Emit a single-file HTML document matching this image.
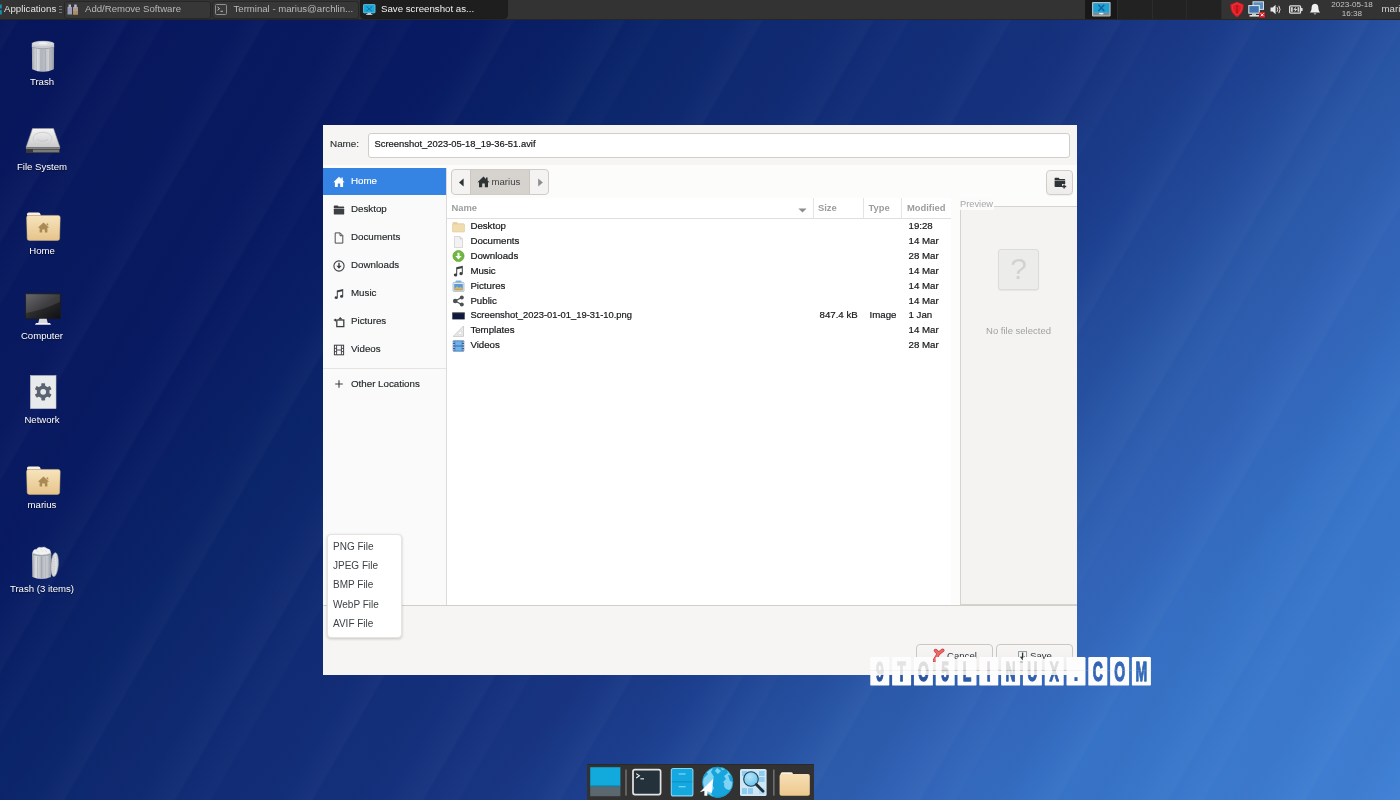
<!DOCTYPE html>
<html><head><meta charset="utf-8"><title>Save screenshot as...</title>
<style>
*{box-sizing:border-box;margin:0;padding:0}
html,body{width:1400px;height:800px;overflow:hidden}
body{font-family:"Liberation Sans",sans-serif;font-size:9.5px;color:#2e3436;position:relative;
 background:#0a1c66;}
#bg{position:absolute;left:0;top:0;width:1400px;height:800px}
.abs{position:absolute}
/* top panel */
#panel{position:absolute;left:0;top:0;width:1400px;height:20px;background:#333333;border-bottom:1px solid #262626;color:#d6d6d6;}
#panel .t{opacity:.999;position:absolute;top:0;height:18px;line-height:17px;white-space:nowrap}
.tb{position:absolute;top:1px;height:17.500px;border-radius:3px;background:#373737;border:1px solid #272727}
.tb.act{background:#1e1e1e;border-color:#1c1c1c;top:-1px;height:20px;border-radius:0 0 4px 4px}
/* desktop icons */
.dlabel{opacity:.999;position:absolute;color:#fff;text-align:center;width:120px;font-size:9.6px;line-height:12px;text-shadow:0 1px 1px rgba(0,0,0,.6)}
/* dialog */
#dlg{opacity:.999;position:absolute;left:323px;top:125px;width:754px;height:549.500px;background:#f6f5f4;overflow:hidden}
#side{position:absolute;left:0;top:43px;width:124px;height:437px;background:#fafafa;border-right:1px solid #dcdad7}
.srow{position:absolute;left:0;width:123px;height:27px;line-height:25px;padding-left:28px;font-size:9.75px;color:#23282a;-webkit-text-stroke:0.150px #23282a}
.srow.sel{background:#3584e4;color:#fff;-webkit-text-stroke:0.150px #fff}
#list{position:absolute;left:124px;top:73px;width:504px;height:407px;background:#fff}
.frow{position:absolute;left:124px;width:504px;height:15px;line-height:14px;font-size:9.7px;color:#15181a;-webkit-text-stroke:0.2px #15181a;white-space:nowrap}
.frow span{position:absolute;top:0}
.si{position:absolute;left:10px;top:8px;width:12px;height:12px}
.fi{position:absolute;left:4.800px;top:1.500px;width:13px;height:12px}
.hd{position:absolute;top:4px;font-size:9.400px;line-height:12px;font-weight:bold;color:#9b9d9e}
.btn{position:absolute;width:77px;height:27px;border:1px solid #cdc7c2;border-radius:4px;background:linear-gradient(#f7f6f5,#efedeb)}
.mi{position:absolute;left:5px;font-size:10px;line-height:14px;color:#3d4245;white-space:nowrap}
</style></head><body>
<div id="bg" style="background:linear-gradient(131deg,#07155a 0%,#09195f 12%,#081a62 23%,#0b256a 32%,#0f2970 37%,#15317d 51%,#183582 56%,#1d4190 62%,#2b59a9 70.5%,#3264b8 76.7%,#3672c6 83%,#4181d5 100%)"></div>
<div id="bg2" class="abs" style="left:0;top:0;width:1400px;height:800px;background:repeating-linear-gradient(120deg,rgba(255,255,255,0) 0px,rgba(255,255,255,.022) 24px,rgba(255,255,255,0) 27px,rgba(0,0,40,.025) 60px,rgba(255,255,255,0) 88px,rgba(255,255,255,.025) 120px,rgba(255,255,255,0) 123px,rgba(255,255,255,.015) 151px,rgba(255,255,255,0) 154px,rgba(0,0,40,.02) 190px,rgba(255,255,255,0) 215px)"></div>
<div id="panel">
 <svg class="abs" style="left:0;top:3px" width="4" height="13" viewBox="0 0 4 13"><rect x="0" y="1.500" width="1.800" height="10" fill="#178fae"/><rect x="0" y="5.500" width="3" height="1.600" fill="#333"/></svg>
 <div class="t" style="left:4px;color:#e4e4e4;font-size:9.7px">Applications</div>
 <svg class="abs" style="left:58px;top:5px" width="4" height="9" viewBox="0 0 4 9"><rect x="1" y="1" width="3" height="1" fill="#777"/><rect x="1" y="4" width="3" height="1" fill="#777"/><rect x="1" y="7" width="3" height="1" fill="#777"/></svg>
 <div class="tb" style="left:64px;width:147px"></div>
 <svg class="abs" style="left:67px;top:4px" width="12" height="11" viewBox="0 0 12 11"><rect x="0.5" y="3" width="4.5" height="7.5" fill="#9a9bb8"/><rect x="6" y="3" width="5" height="7.5" fill="#a89a98"/><rect x="1.5" y="0.5" width="2.5" height="3" fill="#b8b8cc"/><rect x="7.2" y="0.5" width="2.5" height="3" fill="#b8b8cc"/><rect x="6" y="7" width="5" height="3.5" fill="#b08a5a"/></svg>
 <div class="t" style="left:85px;color:#b9b9b9;font-size:9.6px">Add/Remove Software</div>
 <div class="tb" style="left:212px;width:147px"></div>
 <svg class="abs" style="left:215px;top:4px" width="12" height="11" viewBox="0 0 12 11"><rect x="0.5" y="0.5" width="11" height="10" rx="1" fill="#3a3a3a" stroke="#8f8f8f" stroke-width="1"/><path d="M2.5 3 L4.5 4.6 L2.5 6.2" fill="none" stroke="#cfcfcf" stroke-width="0.9"/><rect x="5.5" y="6.8" width="2.4" height="0.9" fill="#cfcfcf"/></svg>
 <div class="t" style="left:233.5px;color:#b9b9b9;font-size:9.6px">Terminal - marius@archlin...</div>
 <div class="tb act" style="left:360px;width:148px"></div>
 <svg class="abs" style="left:363px;top:3.500px" width="12.500" height="11.600" viewBox="0 0 14 13"><rect x="0.5" y="0.5" width="13" height="9.5" rx="0.8" fill="#18a8d8" stroke="#7fd0ea" stroke-width="0.8"/><path d="M4 3 L10 8 M10 3 L4 8" stroke="#0d6fa0" stroke-width="1.1"/><rect x="5" y="10" width="4" height="1.6" fill="#c8c8c8"/><rect x="3.5" y="11.4" width="7" height="1.2" fill="#dadada"/></svg>
 <div class="t" style="left:381px;color:#f2f2f2;font-size:9.7px">Save screenshot as...</div>
 <div class="abs" style="left:1085px;top:0;width:137px;height:19px;background:#222"></div>
 <div class="abs" style="left:1085px;top:0;width:33px;height:19px;background:#181818"></div>
 <div class="abs" style="left:1117px;top:0;width:1px;height:19px;background:#2c2c2c"></div>
 <div class="abs" style="left:1152px;top:0;width:1px;height:19px;background:#2c2c2c"></div>
 <div class="abs" style="left:1186px;top:0;width:1px;height:19px;background:#2c2c2c"></div>
 <div class="abs" style="left:1221px;top:0;width:1px;height:19px;background:#2c2c2c"></div>
 <svg class="abs" style="left:1092px;top:2px" width="19" height="15" viewBox="0 0 19 15"><rect x="0" y="0" width="18.600" height="14.400" rx="0.800" fill="#b4bcc1"/><rect x="1.200" y="1.200" width="16.200" height="9.600" fill="#1ea2d3"/><rect x="1.200" y="10.800" width="16.200" height="2.600" fill="#7f8a90"/><path d="M6.400 2.800 L12.200 9 M12.200 2.800 L6.400 9" stroke="#0f62a4" stroke-width="1.500"/><ellipse cx="9.300" cy="11.600" rx="2.400" ry="0.900" fill="#e8ecee"/></svg>
 <svg class="abs" style="left:1229px;top:1px" width="16" height="17" viewBox="0 0 16 17"><path d="M8 0.8 L14.6 3.6 C14.8 9 12.6 13.6 8 16.2 C3.4 13.6 1.2 9 1.4 3.6 Z" fill="#e01b24"/><circle cx="8" cy="5.600" r="1" fill="#a3121a"/><rect x="7.300" y="7.400" width="1.400" height="5" fill="#a3121a"/><path d="M8 2.400 L12.800 4.600 C12.800 8.600 11.400 12 8 14.200 C4.600 12 3.200 8.600 3.200 4.600Z" fill="none" stroke="#f2555c" stroke-width="0.500"/></svg>
 <svg class="abs" style="left:1248px;top:1px" width="18" height="17" viewBox="0 0 18 17"><rect x="5" y="0.8" width="10.5" height="7.6" fill="#5b8fc4" stroke="#d8dde2" stroke-width="1"/><rect x="0.8" y="4.6" width="10.5" height="7.6" fill="#3f74b0" stroke="#e6e9ec" stroke-width="1"/><rect x="4" y="12.6" width="4" height="1.4" fill="#c9c9c9"/><rect x="1.5" y="14" width="9.5" height="1.6" fill="#dedede"/><rect x="11.4" y="11" width="5.6" height="5.6" fill="#e01b24"/><path d="M12.8 12.4 L15.6 15.2 M15.6 12.4 L12.8 15.2" stroke="#fff" stroke-width="1"/></svg>
 <svg class="abs" style="left:1270px;top:4px" width="12" height="11" viewBox="0 0 12 11"><path d="M0.5 3.6 H2.6 L5.6 0.8 V10.2 L2.6 7.4 H0.5 Z" fill="#e8e8e8"/><path d="M7 3.2 Q8.4 5.5 7 7.8" fill="none" stroke="#e8e8e8" stroke-width="1"/><path d="M8.8 1.8 Q11.2 5.5 8.8 9.2" fill="none" stroke="#e8e8e8" stroke-width="1"/></svg>
 <svg class="abs" style="left:1289px;top:5px" width="14" height="9" viewBox="0 0 14 9"><rect x="0.6" y="0.8" width="11" height="7.4" rx="1" fill="none" stroke="#e0e0e0" stroke-width="1.2"/><rect x="12" y="3" width="1.6" height="3" fill="#e0e0e0"/><path d="M7.2 1.6 L4.2 4.8 H6.2 L5.2 7.4 L8.4 4 H6.4 Z" fill="#e0e0e0"/><rect x="1.8" y="2.2" width="2" height="4.6" fill="#cfcfcf"/><rect x="8.6" y="2.2" width="1.8" height="4.6" fill="#cfcfcf"/></svg>
 <svg class="abs" style="left:1309px;top:3px" width="12" height="13" viewBox="0 0 12 13"><path d="M6 0.8 C3.4 0.8 2.6 3 2.6 5 C2.6 7.4 1.8 8.4 0.8 9.6 H11.2 C10.2 8.4 9.4 7.4 9.4 5 C9.4 3 8.6 0.8 6 0.8 Z" fill="#f0f0f0"/><path d="M4.6 10.4 A1.5 1.5 0 0 0 7.4 10.4 Z" fill="#f0f0f0"/></svg>
 <div class="abs" style="left:1322px;top:0;width:60px;text-align:center;color:#c4c4c4;font-size:8.100px;line-height:8.600px;padding-top:1.400px;opacity:.999">2023-05-18<br>16:38</div>
 <div class="t" style="left:1381.5px;color:#d4d4d4;font-size:9.7px">marius</div>
</div>
<!-- desktop icons -->
<svg width="0" height="0" style="position:absolute"><defs>
<linearGradient id="can" x1="0" x2="1" y1="0" y2="0"><stop offset="0" stop-color="#a0a4ac"/><stop offset="0.22" stop-color="#dfe1e5"/><stop offset="0.48" stop-color="#b2b6bd"/><stop offset="0.75" stop-color="#cdd0d5"/><stop offset="1" stop-color="#9498a2"/></linearGradient>
<linearGradient id="fold" x1="0" x2="0" y1="0" y2="1"><stop offset="0" stop-color="#f7e4bd"/><stop offset="1" stop-color="#e6c48a"/></linearGradient>
<linearGradient id="mon" x1="0" x2="1" y1="0" y2="1"><stop offset="0" stop-color="#5a5a5e"/><stop offset="0.5" stop-color="#2a2a2d"/><stop offset="1" stop-color="#0f0f11"/></linearGradient>
<linearGradient id="drv" x1="0" x2="0" y1="0" y2="1"><stop offset="0" stop-color="#f4f4f4"/><stop offset="1" stop-color="#c9c9c9"/></linearGradient>
</defs></svg>
<svg class="abs" style="left:30px;top:39px" width="26" height="34" viewBox="0 0 26 34">
 <path d="M1.900 6 L2.100 30.200 Q13 35.400 23.900 30.200 L24.100 6 Z" fill="url(#can)"/>
 <path d="M6.400 10 V32 M10.800 10.500 V33 M15.400 10.500 V33 M19.800 10 V32" stroke="#8c9099" stroke-width="1.200" opacity=".38"/>
 <path d="M1.900 4.800 Q1.900 2.200 13 2.200 Q24.100 2.200 24.100 4.800 V8.200 Q13 11.400 1.900 8.200Z" fill="#c9ccd2"/>
 <ellipse cx="13" cy="4.900" rx="11.100" ry="2.800" fill="#d9dbdf" stroke="#b3b6bc" stroke-width="0.400"/>
 <ellipse cx="13" cy="4.300" rx="4.600" ry="1.200" fill="#eceef0"/>
 <path d="M1.900 8.200 Q13 11.400 24.100 8.200" fill="none" stroke="#8d9198" stroke-width="0.700"/>
</svg>
<div class="dlabel" style="left:-18px;top:76px">Trash</div>
<svg class="abs" style="left:25px;top:127px" width="36" height="28" viewBox="0 0 36 28">
 <path d="M7.5 1.5 H28.5 L35 20.5 H1 Z" fill="url(#drv)" stroke="#9a9a9a" stroke-width="0.6"/>
 <ellipse cx="17.5" cy="11.5" rx="9.5" ry="6.2" fill="none" stroke="#cfcfcf" stroke-width="1"/>
 <path d="M12 12.5 Q17 16 23 12.5" fill="none" stroke="#c4c4c4" stroke-width="0.9"/>
 <rect x="1" y="20.5" width="34" height="5.6" rx="0.8" fill="#3a3a3a"/>
 <rect x="1" y="20.5" width="34" height="1.4" fill="#8b8b8b"/>
 <rect x="8" y="22.6" width="26" height="2.6" fill="#7a7a7a"/>
</svg>
<div class="dlabel" style="left:-18px;top:160.500px">File System</div>
<svg class="abs" style="left:26px;top:211px" width="35" height="31" viewBox="0 0 35 31">
 <path d="M1 3.2 Q1 1.4 2.8 1.4 H12.5 Q14 1.4 14.4 3 L14.8 4.6 H1 Z" fill="#fbf3e2"/>
 <path d="M0.6 6.4 Q0.6 4.4 2.6 4.4 H32 Q34.2 4.400 34.200 6.400 L33.600 27.600 Q33.600 29.400 31.600 29.400 H3.200 Q1.200 29.400 1.200 27.600 Z" fill="url(#fold)" stroke="#d9b777" stroke-width="0.5"/>
 <path d="M17.5 11.600 L11.800 16.800 H13.600 V21.600 H16.200 V18.400 H18.800 V21.600 H21.400 V16.800 H23.200 Z M20.600 12.400 h1.600 v2.600 l-1.600 -1.500z" fill="#a98a55"/>
</svg>
<div class="dlabel" style="left:-18px;top:245px">Home</div>
<svg class="abs" style="left:25px;top:293px" width="36" height="33" viewBox="0 0 36 33">
 <rect x="0.4" y="0.6" width="35.2" height="25.200" rx="0.8" fill="url(#mon)" stroke="#1c1c1e" stroke-width="0.8"/>
 <path d="M1.2 1.4 H34.8 V9 Q18 17 1.2 20 Z" fill="#ffffff" opacity="0.10"/>
 <path d="M14.400 25.800 H21.600 L22.800 30 H13.200 Z" fill="#d9d9dc"/>
 <path d="M11 30 H25 L26 31.800 H10 Z" fill="#f2f2f4"/>
</svg>
<div class="dlabel" style="left:-18px;top:329.500px">Computer</div>
<svg class="abs" style="left:30px;top:375px" width="27" height="35" viewBox="0 0 27 35">
 <rect x="0.400" y="0.600" width="25.600" height="33" fill="#e9eaec" stroke="#c3c6ca" stroke-width="0.6"/>
 <g transform="translate(13.200 16.800)" fill="#5c6370">
  <circle r="6.400"/>
  <g id="teeth"><rect x="-1.900" y="-8.600" width="3.800" height="17.200" rx="0.6"/><rect x="-1.900" y="-8.600" width="3.800" height="17.200" rx="0.6" transform="rotate(60)"/><rect x="-1.900" y="-8.600" width="3.800" height="17.200" rx="0.6" transform="rotate(120)"/></g>
  <circle r="2.900" fill="#e9eaec"/>
 </g>
</svg>
<div class="dlabel" style="left:-18px;top:413.500px">Network</div>
<svg class="abs" style="left:26px;top:464.500px" width="35" height="31" viewBox="0 0 35 31">
 <path d="M1 3.200 Q1 1.400 2.800 1.400 H12.500 Q14 1.400 14.400 3 L14.800 4.600 H1 Z" fill="#fbf3e2"/>
 <path d="M0.600 6.400 Q0.600 4.400 2.600 4.400 H32 Q34.200 4.400 34.200 6.400 L33.600 27.600 Q33.600 29.400 31.600 29.400 H3.200 Q1.200 29.400 1.200 27.600 Z" fill="url(#fold)" stroke="#d9b777" stroke-width="0.500"/>
 <path d="M17.500 11.600 L11.800 16.800 H13.600 V21.600 H16.200 V18.400 H18.800 V21.600 H21.400 V16.800 H23.200 Z M20.600 12.400 h1.600 v2.600 l-1.600 -1.500z" fill="#a98a55"/>
</svg>
<div class="dlabel" style="left:-18px;top:498.500px">marius</div>
<svg class="abs" style="left:30px;top:544px" width="30" height="38" viewBox="0 0 30 38">
 <ellipse cx="24.600" cy="20.600" rx="3.700" ry="12" fill="#d3d6d9" stroke="#9ea2a7" stroke-width="0.600" transform="rotate(4 24.600 20.600)"/>
 <path d="M24.800 10.500 Q27 20 25 31" fill="none" stroke="#eef0f1" stroke-width="1.100" stroke-dasharray="1.300 1.300"/>
 <path d="M2 9.500 L2.300 33 Q11.600 37 21 33 L21.300 9.500 Z" fill="url(#can)"/>
 <path d="M7.400 12.500 V34 M11.600 13 V34.800 M15.800 12.500 V34.200" stroke="#8c9099" stroke-width="1.100" opacity=".4"/>
 <ellipse cx="11.650" cy="9.600" rx="9.700" ry="2.600" fill="#9da1a6"/>
 <path d="M2.600 9.200 Q3 5 6.500 5.200 Q8 2.400 11.500 3.400 Q15 2 17 4.600 Q20.800 5 20.700 9.200 Q11.600 12.600 2.600 9.200 Z" fill="#f1f2f3" stroke="#c9ccd0" stroke-width="0.400"/>
 <path d="M6.500 6.500 L9 8.500 M10.500 5 L13 7.800 M14.500 5.500 L17 8.200" stroke="#cfd2d6" stroke-width="0.600"/>
</svg>
<div class="dlabel" style="left:-18px;top:582.500px">Trash (3 items)</div>
<div id="dlg">
 <div class="abs" style="left:0;top:40px;width:754px;height:440px;background:#fcfcfb"></div>
 <div class="abs" style="left:7px;top:13px;font-size:9.900px;line-height:12px;color:#2e3436;-webkit-text-stroke:0.150px #2e3436">Name:</div>
 <div class="abs" style="left:45px;top:8px;width:702px;height:25px;background:#fff;border:1px solid #d2cdc9;border-radius:3px;line-height:20.500px;padding-left:5.500px;font-size:9.420px;color:#15181a;-webkit-text-stroke:0.2px #15181a">Screenshot_2023-05-18_19-36-51.avif</div>
 <div id="side">
  <div class="srow sel" style="top:0px"><svg class="si" viewBox="0 0 12 12"><path d="M6 0.800 L0.400 6.200 H1.900 V11 H4.800 V7.600 H7.200 V11 H10.100 V6.200 H11.600 L9.800 4.500 V1.600 H8.400 V3.100Z" fill="#fff"/></svg>Home</div>
  <div class="srow" style="top:28px"><svg class="si" viewBox="0 0 12 12"><path d="M0.800 2.200 Q0.800 1.400 1.600 1.400 H4.600 L5.600 2.600 H10.400 Q11.200 2.600 11.200 3.400 V4 H0.800Z" fill="#3c4043"/><rect x="0.800" y="4.600" width="10.400" height="6" rx="0.700" fill="#3c4043"/></svg>Desktop</div>
  <div class="srow" style="top:56px"><svg class="si" viewBox="0 0 12 12"><path d="M2.200 0.900 H7.200 L9.800 3.500 V11.100 H2.200Z M7 1 V3.700 H9.700" fill="none" stroke="#4a4e51" stroke-width="1"/></svg>Documents</div>
  <div class="srow" style="top:84px"><svg class="si" viewBox="0 0 12 12"><circle cx="6" cy="6" r="5.100" fill="none" stroke="#3c4043" stroke-width="1.100"/><path d="M5.300 2.800 H6.700 V5.800 H8.600 L6 8.800 L3.400 5.800 H5.300Z" fill="#3c4043"/></svg>Downloads</div>
  <div class="srow" style="top:112px"><svg class="si" viewBox="0 0 12 12"><path d="M3.800 2.400 L10.200 1 V8.400 A1.600 1.400 0 1 1 9.200 7.100 V3.300 L4.800 4.300 V9.700 A1.600 1.400 0 1 1 3.800 8.400Z" fill="#3c4043"/></svg>Music</div>
  <div class="srow" style="top:140px"><svg class="si" viewBox="0 0 12 12"><rect x="3.800" y="4" width="7" height="6.600" fill="none" stroke="#3c4043" stroke-width="1.300"/><path d="M5 3.400 L7.300 1 L9.600 3.400Z" fill="#3c4043"/><path d="M0.400 4 L3 2.400 V5.800Z" fill="#3c4043"/></svg>Pictures</div>
  <div class="srow" style="top:168px"><svg class="si" viewBox="0 0 12 12"><rect x="1.400" y="1.200" width="9.200" height="9.600" fill="none" stroke="#3c4043" stroke-width="1"/><path d="M3.600 1.200 V10.800 M8.400 1.200 V10.800 M1.400 4.400 H3.600 M1.400 7.600 H3.600 M8.400 4.400 H10.600 M8.400 7.600 H10.600 M3.600 6 H8.400" stroke="#3c4043" stroke-width="0.900" fill="none"/></svg>Videos</div>
  <div class="abs" style="left:0;top:199.500px;width:123px;height:1px;background:#e6e4e2"></div>
  <div class="srow" style="top:202px;height:28px;line-height:27.300px"><svg class="si" viewBox="0 0 12 12"><path d="M6 2.200 V9.800 M2.200 6 H9.800" stroke="#3c4043" stroke-width="1.100"/></svg>Other Locations</div>
 </div>
 <!-- path bar -->
 <div class="abs" style="left:128px;top:44px;width:98px;height:26px;border:1px solid #d0cbc7;border-radius:4px;background:#f4f3f1;overflow:hidden">
  <div class="abs" style="left:18px;top:0;width:60px;height:24px;background:#d6d2ce;border-left:1px solid #cdc7c2;border-right:1px solid #cdc7c2"></div>
  <svg class="abs" style="left:5.500px;top:7.500px" width="7" height="9" viewBox="0 0 7 9"><path d="M5.600 0.600 V8.400 L1 4.500Z" fill="#2e3436"/></svg>
  <svg class="abs" style="left:24.500px;top:6px" width="13" height="12" viewBox="0 0 13 12"><path d="M6.500 0.600 L0.400 6.200 H2 V11.200 H5.200 V7.600 H7.800 V11.200 H11 V6.200 H12.600 L10.600 4.400 V1.400 H9 V2.900Z" fill="#2e3436"/></svg>
  <div class="abs" style="left:39.500px;top:5.500px;font-size:9.600px;line-height:12px;color:#3d4245">marius</div>
  <svg class="abs" style="left:84.500px;top:7.500px" width="7" height="9" viewBox="0 0 7 9"><path d="M1.200 0.600 V8.400 L5.800 4.500Z" fill="#8b8e8f"/></svg>
 </div>
 <!-- new folder -->
 <div class="abs" style="left:723px;top:44.500px;width:27px;height:25.500px;border:1px solid #d2cdc9;border-radius:4px;background:linear-gradient(#f5f4f3,#eeedeb);box-shadow:0 1px 1px rgba(0,0,0,.05)"></div>
 <svg class="abs" style="left:730.500px;top:52px" width="13" height="12" viewBox="0 0 13 12"><path d="M0.600 1.600 Q0.600 0.800 1.400 0.800 H4.600 L5.600 2 H10.400 Q11.200 2 11.200 2.800 V3.400 H0.600Z" fill="#2e3436"/><path d="M0.600 4 H11.200 V7 H8 V10 H1.400 Q0.600 10 0.600 9.200Z" fill="#2e3436"/><path d="M9.400 7.400 H10.800 V8.800 H12.200 V10.200 H10.800 V11.600 H9.400 V10.200 H8 V8.800 H9.400Z" fill="#2e3436"/></svg>
 <!-- list -->
 <div id="list">
  <div class="abs" style="left:0;top:19.500px;width:504px;height:1px;background:#e1dfdd"></div>
  <div class="abs" style="left:366px;top:0;width:1px;height:20px;background:#e6e4e2"></div>
  <div class="abs" style="left:416px;top:0;width:1px;height:20px;background:#e6e4e2"></div>
  <div class="abs" style="left:454.300px;top:0;width:1px;height:20px;background:#e6e4e2"></div>
  <div class="hd" style="left:4.500px">Name</div>
  <div class="hd" style="left:371px">Size</div>
  <div class="hd" style="left:421.500px">Type</div>
  <div class="hd" style="left:460px">Modified</div>
  <svg class="abs" style="left:350.500px;top:9.500px" width="9" height="5" viewBox="0 0 9 5"><path d="M0.400 0.400 H8.600 L4.500 4.600Z" fill="#8b8e8f"/></svg>
 </div>
 <div class="frow" style="top:94.20px"><svg class="fi" viewBox="0 0 13 12"><path d="M0.5 2 Q0.5 1 1.500 1 H5 L6 2.400 H12 V4 H0.500Z" fill="#e9d3a6"/><rect x="0.400" y="3" width="12.200" height="8" rx="0.800" fill="#f1dcb0" stroke="#dcc08b" stroke-width="0.500"/></svg><span style="left:23.400px">Desktop</span><span style="left:372.500px"></span><span style="left:422.500px"></span><span style="left:461.500px">19:28</span></div>
 <div class="frow" style="top:109.07px"><svg class="fi" viewBox="0 0 13 12"><path d="M2.500 0.500 H8 L10.500 3 V11.500 H2.500Z" fill="#f2f2f2" stroke="#c6c6c6" stroke-width="0.600"/><path d="M8 0.500 V3 H10.500" fill="#dcdcdc" stroke="#c6c6c6" stroke-width="0.500"/></svg><span style="left:23.400px">Documents</span><span style="left:372.500px"></span><span style="left:422.500px"></span><span style="left:461.500px">14 Mar</span></div>
 <div class="frow" style="top:123.95px"><svg class="fi" viewBox="0 0 13 12"><circle cx="6.500" cy="6" r="5.600" fill="#6fb83f"/><circle cx="6.500" cy="6" r="5.600" fill="none" stroke="#5aa02f" stroke-width="0.600"/><path d="M5.500 2.800 H7.500 V6 H9.600 L6.500 9.400 L3.400 6 H5.500Z" fill="#fff"/></svg><span style="left:23.400px">Downloads</span><span style="left:372.500px"></span><span style="left:422.500px"></span><span style="left:461.500px">28 Mar</span></div>
 <div class="frow" style="top:138.82px"><svg class="fi" viewBox="0 0 13 12"><path d="M4.200 2.200 L10.800 0.800 V8.600 A1.700 1.500 0 1 1 9.800 7.300 V3.200 L5.200 4.200 V9.900 A1.700 1.500 0 1 1 4.200 8.600Z" fill="#3c4043"/></svg><span style="left:23.400px">Music</span><span style="left:372.500px"></span><span style="left:422.500px"></span><span style="left:461.500px">14 Mar</span></div>
 <div class="frow" style="top:153.70px"><svg class="fi" viewBox="0 0 13 12"><rect x="3.500" y="0.600" width="6" height="3" rx="1" fill="#7fb2dd"/><rect x="1" y="2.400" width="11" height="9" rx="0.800" fill="#e6e8ea" stroke="#8fb0cc" stroke-width="0.700"/><rect x="2.200" y="4" width="8.600" height="5" fill="#5b9bd5"/><path d="M2.200 9 L5 6.200 L7 8 L8.600 6.800 L10.800 9Z" fill="#d9b36a"/><rect x="2.200" y="9" width="8.600" height="1.400" fill="#c9a25a"/></svg><span style="left:23.400px">Pictures</span><span style="left:372.500px"></span><span style="left:422.500px"></span><span style="left:461.500px">14 Mar</span></div>
 <div class="frow" style="top:168.57px"><svg class="fi" viewBox="0 0 13 12"><path d="M3.200 6 L9.600 2.400 M3.200 6 L9.600 9.600" stroke="#4d5154" stroke-width="1.200"/><circle cx="3.200" cy="6" r="2.300" fill="#4d5154"/><circle cx="9.800" cy="2.400" r="2" fill="#4d5154"/><circle cx="9.800" cy="9.600" r="2" fill="#4d5154"/></svg><span style="left:23.400px">Public</span><span style="left:372.500px"></span><span style="left:422.500px"></span><span style="left:461.500px">14 Mar</span></div>
 <div class="frow" style="top:183.45px"><svg class="fi" viewBox="0 0 13 12"><rect x="0.300" y="2.600" width="12.400" height="6.800" fill="#101a3c"/><rect x="0.300" y="2.600" width="12.400" height="0.800" fill="#3a3a3a"/></svg><span style="left:23.400px;font-size:9.380px">Screenshot_2023-01-01_19-31-10.png</span><span style="left:372.500px">847.4 kB</span><span style="left:422.500px">Image</span><span style="left:461.500px">1 Jan</span></div>
 <div class="frow" style="top:198.32px"><svg class="fi" viewBox="0 0 13 12"><path d="M11.500 1 V11.400 H1.200Z" fill="#ececec" stroke="#bdbdbd" stroke-width="0.700"/><path d="M9.600 5.200 V9.600 H5.200Z" fill="#fff" stroke="#c8c8c8" stroke-width="0.500"/></svg><span style="left:23.400px">Templates</span><span style="left:372.500px"></span><span style="left:422.500px"></span><span style="left:461.500px">14 Mar</span></div>
 <div class="frow" style="top:213.20px"><svg class="fi" viewBox="0 0 13 12"><rect x="0.800" y="0.600" width="11.400" height="10.800" rx="0.600" fill="#2f5f9c"/><rect x="3.200" y="1.200" width="6.600" height="4.400" fill="#6db2ea"/><rect x="3.200" y="6.400" width="6.600" height="4.400" fill="#6db2ea"/><g fill="#dfe9f3"><rect x="1.300" y="1.400" width="1.200" height="1.400"/><rect x="1.300" y="4" width="1.200" height="1.400"/><rect x="1.300" y="6.600" width="1.200" height="1.400"/><rect x="1.300" y="9.200" width="1.200" height="1.400"/><rect x="10.500" y="1.400" width="1.200" height="1.400"/><rect x="10.500" y="4" width="1.200" height="1.400"/><rect x="10.500" y="6.600" width="1.200" height="1.400"/><rect x="10.500" y="9.200" width="1.200" height="1.400"/></g></svg><span style="left:23.400px">Videos</span><span style="left:372.500px"></span><span style="left:422.500px"></span><span style="left:461.500px">28 Mar</span></div>
 <!-- preview -->
 <div class="abs" style="left:637px;top:80.500px;width:117px;height:399.500px;background:#f4f3f2;border:1px solid #d6d3cf;border-right:none"></div>
 <div class="abs" style="left:637px;top:73px;padding-right:1px;background:#fbfbfa;font-size:9.300px;line-height:12px;color:#a6a8a9">Preview</div>
 <div class="abs" style="left:675px;top:123.500px;width:41px;height:41px;background:#ececeb;border:1px solid #dddbd8;border-radius:3px;box-shadow:0 1px 1px rgba(0,0,0,.06);text-align:center;font-size:30px;line-height:38px;color:#d2d2d1">?</div>
 <div class="abs" style="left:637px;top:199.700px;width:117px;text-align:center;font-size:9.500px;line-height:12px;color:#9fa1a2">No file selected</div>
 <div class="abs" style="left:0;top:479.500px;width:754px;height:1px;background:#d1cdc9"></div>
 <!-- buttons -->
 <div class="btn" style="left:593px;top:519px"></div>
 <div class="btn" style="left:673px;top:519px"></div>
 <svg class="abs" style="left:609px;top:523px" width="14" height="14" viewBox="0 0 14 14"><g fill="none" stroke-linecap="round" stroke-linejoin="round"><path d="M3.600 2.600 L6.400 5.600 L10.600 2.400 M6.400 5.600 L4.600 9 L2.400 12.600" stroke="#b93a3a" stroke-width="3.600"/><path d="M3.600 2.600 L6.400 5.600 L10.600 2.400 M6.400 5.600 L4.600 9 L2.400 12.600" stroke="#f06a6a" stroke-width="2.400"/></g></svg>
 <div class="abs" style="left:624px;top:525px;font-size:9.600px;line-height:12px;color:#2e3436">Cancel</div>
 <svg class="abs" style="left:694.500px;top:526px" width="10" height="12" viewBox="0 0 10 12"><rect x="0.600" y="0.600" width="8" height="10.400" fill="#f6f6f6" stroke="#8a8e90" stroke-width="0.900"/><path d="M4.600 1.600 V7.400 M2.600 5.600 L4.600 8.200 L6.600 5.600" stroke="#2e3436" stroke-width="1.300" fill="none"/></svg>
 <div class="abs" style="left:707px;top:525px;font-size:9.600px;line-height:12px;color:#2e3436">Save</div>
 <!-- dropdown -->
 <div class="abs" style="left:4px;top:408.700px;width:75px;height:104px;background:#fff;border:1px solid #e6e3e0;border-radius:4px;box-shadow:0 1px 3px rgba(0,0,0,.2)">
  <div class="mi" style="top:5.300px">PNG File</div>
  <div class="mi" style="top:24.500px">JPEG File</div>
  <div class="mi" style="top:43.700px">BMP File</div>
  <div class="mi" style="top:62.900px">WebP File</div>
  <div class="mi" style="top:82.200px">AVIF File</div>
 </div>
</div>
<svg class="abs" style="left:868px;top:655px" width="286" height="34" viewBox="0 0 286 34">
<defs><mask id="wm" maskUnits="userSpaceOnUse" x="0" y="0" width="286" height="34"><rect width="286" height="34" fill="#000"/><rect x="2.3" y="2" width="19.0" height="28.600" rx="1.200" fill="#fff"/><rect x="24.1" y="2" width="19.0" height="28.600" rx="1.200" fill="#fff"/><rect x="45.9" y="2" width="19.0" height="28.600" rx="1.200" fill="#fff"/><rect x="67.7" y="2" width="19.0" height="28.600" rx="1.200" fill="#fff"/><rect x="89.5" y="2" width="19.0" height="28.600" rx="1.200" fill="#fff"/><rect x="111.3" y="2" width="19.0" height="28.600" rx="1.200" fill="#fff"/><rect x="133.1" y="2" width="19.0" height="28.600" rx="1.200" fill="#fff"/><rect x="154.9" y="2" width="19.0" height="28.600" rx="1.200" fill="#fff"/><rect x="176.7" y="2" width="19.0" height="28.600" rx="1.200" fill="#fff"/><rect x="198.5" y="2" width="19.0" height="28.600" rx="1.200" fill="#fff"/><rect x="220.3" y="2" width="19.0" height="28.600" rx="1.200" fill="#fff"/><rect x="242.1" y="2" width="19.0" height="28.600" rx="1.200" fill="#fff"/><rect x="263.9" y="2" width="19.0" height="28.600" rx="1.200" fill="#fff"/><text transform="translate(11.8 26.200) scale(0.520 1)" text-anchor="middle" font-family="Liberation Sans, sans-serif" font-weight="bold" font-size="27" fill="#000" stroke="#000" stroke-width="1.300" stroke-linejoin="round">9</text><text transform="translate(33.6 26.200) scale(0.520 1)" text-anchor="middle" font-family="Liberation Sans, sans-serif" font-weight="bold" font-size="27" fill="#000" stroke="#000" stroke-width="1.300" stroke-linejoin="round">T</text><text transform="translate(55.4 26.200) scale(0.520 1)" text-anchor="middle" font-family="Liberation Sans, sans-serif" font-weight="bold" font-size="27" fill="#000" stroke="#000" stroke-width="1.300" stroke-linejoin="round">O</text><text transform="translate(77.2 26.200) scale(0.520 1)" text-anchor="middle" font-family="Liberation Sans, sans-serif" font-weight="bold" font-size="27" fill="#000" stroke="#000" stroke-width="1.300" stroke-linejoin="round">5</text><text transform="translate(99.0 26.200) scale(0.520 1)" text-anchor="middle" font-family="Liberation Sans, sans-serif" font-weight="bold" font-size="27" fill="#000" stroke="#000" stroke-width="1.300" stroke-linejoin="round">L</text><text transform="translate(120.8 26.200) scale(0.520 1)" text-anchor="middle" font-family="Liberation Sans, sans-serif" font-weight="bold" font-size="27" fill="#000" stroke="#000" stroke-width="1.300" stroke-linejoin="round">I</text><text transform="translate(142.6 26.200) scale(0.520 1)" text-anchor="middle" font-family="Liberation Sans, sans-serif" font-weight="bold" font-size="27" fill="#000" stroke="#000" stroke-width="1.300" stroke-linejoin="round">N</text><text transform="translate(164.4 26.200) scale(0.520 1)" text-anchor="middle" font-family="Liberation Sans, sans-serif" font-weight="bold" font-size="27" fill="#000" stroke="#000" stroke-width="1.300" stroke-linejoin="round">U</text><text transform="translate(186.2 26.200) scale(0.520 1)" text-anchor="middle" font-family="Liberation Sans, sans-serif" font-weight="bold" font-size="27" fill="#000" stroke="#000" stroke-width="1.300" stroke-linejoin="round">X</text><text transform="translate(208.0 26.200) scale(0.800 0.950)" text-anchor="middle" font-family="Liberation Sans, sans-serif" font-weight="bold" font-size="27" fill="#000">.</text><text transform="translate(229.8 26.200) scale(0.520 1)" text-anchor="middle" font-family="Liberation Sans, sans-serif" font-weight="bold" font-size="27" fill="#000" stroke="#000" stroke-width="1.300" stroke-linejoin="round">C</text><text transform="translate(251.6 26.200) scale(0.520 1)" text-anchor="middle" font-family="Liberation Sans, sans-serif" font-weight="bold" font-size="27" fill="#000" stroke="#000" stroke-width="1.300" stroke-linejoin="round">O</text><text transform="translate(273.4 26.200) scale(0.520 1)" text-anchor="middle" font-family="Liberation Sans, sans-serif" font-weight="bold" font-size="27" fill="#000" stroke="#000" stroke-width="1.300" stroke-linejoin="round">M</text></mask></defs>
<rect width="286" height="34" fill="#fdfdfd" mask="url(#wm)"/>
<g opacity="0.07"><text transform="translate(11.8 26.200) scale(0.520 1)" text-anchor="middle" font-family="Liberation Sans, sans-serif" font-weight="bold" font-size="27" fill="#0a1430" stroke="#0a1430" stroke-width="1.300" stroke-linejoin="round">9</text><text transform="translate(33.6 26.200) scale(0.520 1)" text-anchor="middle" font-family="Liberation Sans, sans-serif" font-weight="bold" font-size="27" fill="#0a1430" stroke="#0a1430" stroke-width="1.300" stroke-linejoin="round">T</text><text transform="translate(55.4 26.200) scale(0.520 1)" text-anchor="middle" font-family="Liberation Sans, sans-serif" font-weight="bold" font-size="27" fill="#0a1430" stroke="#0a1430" stroke-width="1.300" stroke-linejoin="round">O</text><text transform="translate(77.2 26.200) scale(0.520 1)" text-anchor="middle" font-family="Liberation Sans, sans-serif" font-weight="bold" font-size="27" fill="#0a1430" stroke="#0a1430" stroke-width="1.300" stroke-linejoin="round">5</text><text transform="translate(99.0 26.200) scale(0.520 1)" text-anchor="middle" font-family="Liberation Sans, sans-serif" font-weight="bold" font-size="27" fill="#0a1430" stroke="#0a1430" stroke-width="1.300" stroke-linejoin="round">L</text><text transform="translate(120.8 26.200) scale(0.520 1)" text-anchor="middle" font-family="Liberation Sans, sans-serif" font-weight="bold" font-size="27" fill="#0a1430" stroke="#0a1430" stroke-width="1.300" stroke-linejoin="round">I</text><text transform="translate(142.6 26.200) scale(0.520 1)" text-anchor="middle" font-family="Liberation Sans, sans-serif" font-weight="bold" font-size="27" fill="#0a1430" stroke="#0a1430" stroke-width="1.300" stroke-linejoin="round">N</text><text transform="translate(164.4 26.200) scale(0.520 1)" text-anchor="middle" font-family="Liberation Sans, sans-serif" font-weight="bold" font-size="27" fill="#0a1430" stroke="#0a1430" stroke-width="1.300" stroke-linejoin="round">U</text><text transform="translate(186.2 26.200) scale(0.520 1)" text-anchor="middle" font-family="Liberation Sans, sans-serif" font-weight="bold" font-size="27" fill="#0a1430" stroke="#0a1430" stroke-width="1.300" stroke-linejoin="round">X</text><text transform="translate(208.0 26.200) scale(0.800 0.950)" text-anchor="middle" font-family="Liberation Sans, sans-serif" font-weight="bold" font-size="27" fill="#0a1430">.</text><text transform="translate(229.8 26.200) scale(0.520 1)" text-anchor="middle" font-family="Liberation Sans, sans-serif" font-weight="bold" font-size="27" fill="#0a1430" stroke="#0a1430" stroke-width="1.300" stroke-linejoin="round">C</text><text transform="translate(251.6 26.200) scale(0.520 1)" text-anchor="middle" font-family="Liberation Sans, sans-serif" font-weight="bold" font-size="27" fill="#0a1430" stroke="#0a1430" stroke-width="1.300" stroke-linejoin="round">O</text><text transform="translate(273.4 26.200) scale(0.520 1)" text-anchor="middle" font-family="Liberation Sans, sans-serif" font-weight="bold" font-size="27" fill="#0a1430" stroke="#0a1430" stroke-width="1.300" stroke-linejoin="round">M</text></g>
<rect x="2" y="15.400" width="282" height="0.600" fill="#c8ccd4" opacity="0.3"/>
</svg>
<div class="abs" style="left:587px;top:764px;width:226.500px;height:36px;background:#323232;border-top:1px solid #2a2a2a"></div>
<svg class="abs" style="left:587px;top:764px" width="227" height="36" viewBox="0 0 227 36">
 <defs>
  <linearGradient id="dfold" x1="0" x2="0" y1="0" y2="1"><stop offset="0" stop-color="#f6dfb4"/><stop offset="1" stop-color="#edc88e"/></linearGradient>
  <radialGradient id="lens" cx="0.4" cy="0.35" r="0.8"><stop offset="0" stop-color="#b4e4f8"/><stop offset="1" stop-color="#5ec0ee"/></radialGradient>
  <clipPath id="gclip"><circle cx="130.700" cy="18.200" r="15.200"/></clipPath>
 </defs>
 <!-- show desktop -->
 <rect x="3.200" y="3.200" width="30.200" height="19" fill="#12a9dc"/>
 <rect x="3.200" y="22.200" width="30.200" height="10" fill="#5c686f"/>
 <rect x="3.200" y="21.400" width="30.200" height="1.200" fill="#0e86ae"/>
 <rect x="38.200" y="5.600" width="1.600" height="26" fill="#6e6e6e"/>
 <!-- terminal -->
 <rect x="46" y="5.600" width="27.600" height="25" rx="2" fill="#24313a" stroke="#e4e4e6" stroke-width="1.700"/>
 <path d="M49.200 9.600 L52.400 11.800 L49.200 14" fill="none" stroke="#f2f2f2" stroke-width="1.100"/>
 <rect x="53.400" y="14.300" width="3.600" height="1.100" fill="#f2f2f2"/>
 <!-- file cabinet -->
 <rect x="84.300" y="4.500" width="21.600" height="27.400" rx="2" fill="#14a8e0" stroke="#86d4f3" stroke-width="1.100"/>
 <rect x="84.800" y="17.400" width="20.600" height="1" fill="#0f8fc2"/>
 <rect x="91.600" y="9.400" width="7" height="1.100" fill="#8fdaf6"/>
 <rect x="91.600" y="22.200" width="7" height="1.100" fill="#8fdaf6"/>
 <!-- globe -->
 <circle cx="130.700" cy="18.200" r="15.200" fill="#7fd3f4"/>
 <g clip-path="url(#gclip)" fill="#16a5dc">
  <path d="M127 2 L133 2 L135 6 L139 5 L141 9 L137 12 L139 15 L136 18 L140 22 L147 26 L146 33 L137 35 L128 34 L124 30 L127 24 L124 19 L127 13 L124 8 Z"/>
  <path d="M112 9 L118 6 L121 10 L117 14 L113 14 Z"/>
  <path d="M141 11 L147 12 L147 19 L143 17 Z"/>
 </g>
 <g clip-path="url(#gclip)" fill="#7fd3f4">
  <path d="M138 17 Q143 15 145.500 19 Q146 24 142 26 Q137 25 137 21 Z"/>
  <path d="M130 4 L134 7 L131 10 L128 7Z"/>
 </g>
 <circle cx="130.700" cy="18.200" r="15.200" fill="none" stroke="#0f8fc0" stroke-width="0.800"/>
 <path d="M126.400 14.400 L119.600 32.600 L123.200 29.400 L125.200 34 L128 32.800 L126.200 28.600 L130.800 28.400 Z" fill="#fbfdfe" transform="rotate(24 126.400 14.400)"/>
 <!-- magnifier -->
 <rect x="153" y="5" width="26.600" height="27" rx="1.600" fill="#cfe7f5"/>
 <g fill="#8fcdf0"><rect x="155" y="7" width="5" height="5"/><rect x="172" y="7" width="5.600" height="5"/><rect x="172" y="13" width="5.600" height="5"/><rect x="155" y="24" width="5" height="6"/><rect x="161" y="24" width="5" height="6"/><rect x="172" y="24" width="5.600" height="6" opacity=".5"/></g>
 <circle cx="164" cy="15" r="7.300" fill="url(#lens)" stroke="#1f3f52" stroke-width="1.100"/>
 <path d="M169.400 20.600 L176 27.200" stroke="#1f2f3a" stroke-width="2.800" stroke-linecap="round"/>
 <rect x="186" y="5.600" width="1.600" height="26" fill="#6e6e6e"/>
 <!-- folder -->
 <path d="M193.600 10 Q193.600 8.200 195.400 8.200 H204 Q205.400 8.200 205.800 9.400 L206.200 10.600 H193.600Z" fill="#fbf2e0"/>
 <path d="M192.600 12 Q192.600 10 194.600 10 H220.800 Q222.800 10 222.800 12 V30 Q222.800 31.800 220.800 31.800 H194.600 Q192.600 31.800 192.600 30Z" fill="url(#dfold)"/>
</svg>
</body></html>
